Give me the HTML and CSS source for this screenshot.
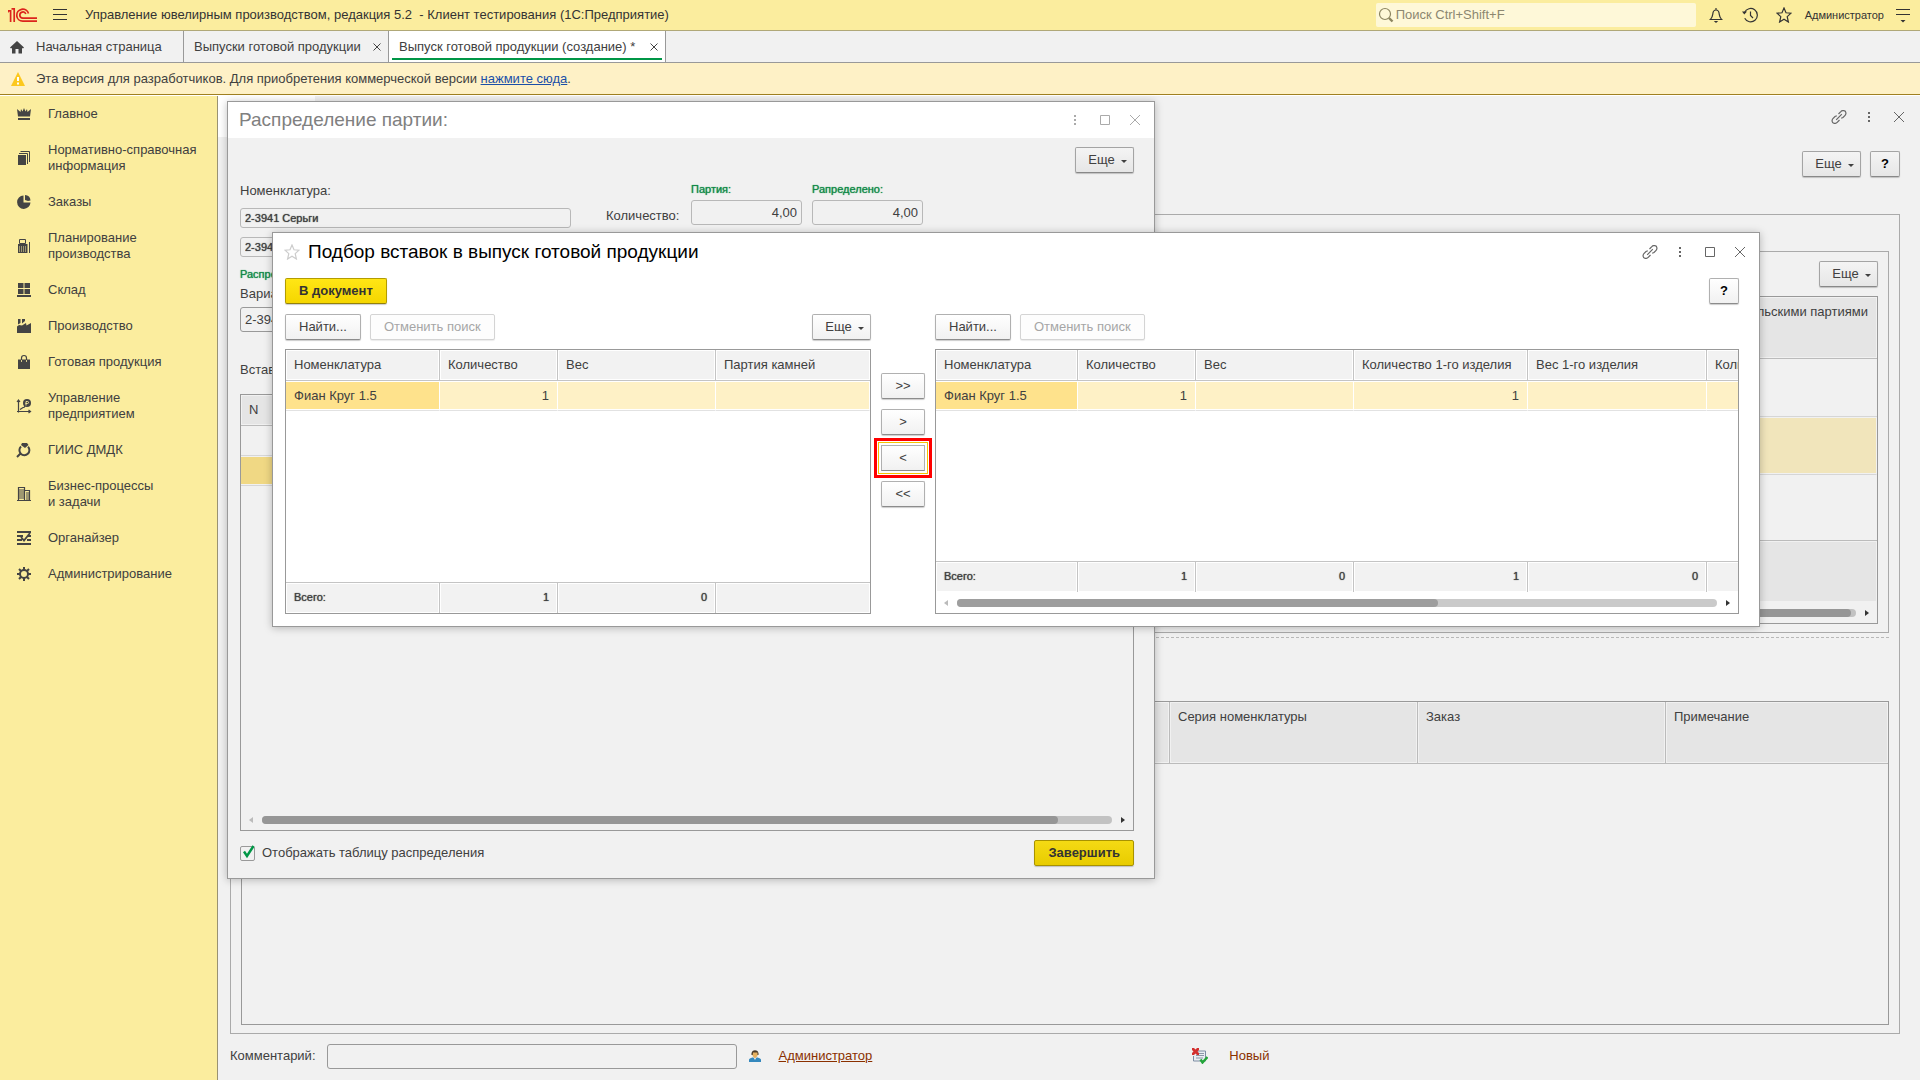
FILE: index.html
```html
<!DOCTYPE html>
<html lang="ru">
<head>
<meta charset="utf-8">
<title>Управление ювелирным производством</title>
<link rel="stylesheet" href="styles.css">
</head>
<body>
<svg class="defs" aria-hidden="true">
  <symbol id="i-link" viewBox="0 0 16 16"><path d="M7.500 5 9.800 2.600a2.700 2.700 0 0 1 1.900-.9h1.200a2.300 2.300 0 0 1 2 2.100v.9a3 3 0 0 1-.8 1.600L12 8.500l-1.800.8M8.500 11l-2.300 2.400a2.700 2.700 0 0 1-1.900.9H3.100a2.300 2.300 0 0 1-2-2.100v-.9a3 3 0 0 1 .8-1.600L4 7.500l1.800-.8M5.200 10.800l5.600-5.600" fill="none" stroke="currentColor" stroke-width="1.200"/></symbol>
  <symbol id="i-dots" viewBox="0 0 16 16"><path d="M7 3h2v2H7zM7 7h2v2H7zM7 11h2v2H7z" fill="currentColor"/></symbol>
  <symbol id="i-max" viewBox="0 0 16 16"><path d="M3.500 3.500h9v9h-9z" fill="none" stroke="currentColor"/></symbol>
  <symbol id="i-close" viewBox="0 0 16 16"><path d="M3 3l10 10M13 3 3 13" fill="none" stroke="currentColor"/></symbol>
  <symbol id="i-star" viewBox="0 0 16 16"><path d="M8 1l2 4.800 5 .4-3.800 3.400 1.200 5.400L8 12.200 3.600 15l1.200-5.400L1 6.200l5-.4z" fill="none" stroke="currentColor" stroke-width="1.200"/></symbol>
  <symbol id="i-caret" viewBox="0 0 6 3"><path d="M0 0h6L3 3z" fill="currentColor"/></symbol>
  <symbol id="i-left" viewBox="0 0 5 6"><path d="M4 0v6L0 3z" fill="currentColor"/></symbol>
  <symbol id="i-right" viewBox="0 0 5 6"><path d="M1 0v6l4-3z" fill="currentColor"/></symbol>
</svg>

<header class="topbar">
  <svg class="logo" viewBox="0 0 30 16"><g fill="none" stroke="#dc241c" stroke-width="1.700"><path d="M0 3.800h2.600V15M0 5.500V3M3.500 1.900h2.700V15"/><path d="M20.500 6.500A6 6 0 1 0 14.800 14.200H29"/><path d="M17.800 7A3.100 3.100 0 1 0 14.800 11.200H29"/></g></svg>
  <button class="bare burger" aria-label="Меню"><svg viewBox="0 0 14 12"><path d="M0 .5h14M0 5.500h14M0 10.500h14" stroke="#333" stroke-width="1.200"/></svg></button>
  <h1 class="app-title">Управление ювелирным производством, редакция 5.2&nbsp; - Клиент тестирования (1С:Предприятие)</h1>
  <label class="search">
    <svg viewBox="0 0 16 16"><circle cx="7" cy="7" r="5.500" fill="none" stroke="#8c8560" stroke-width="1.200"/><path d="M11 11l3.500 3.500" stroke="#8c8560" stroke-width="2.400"/></svg>
    <input type="search" placeholder="Поиск Ctrl+Shift+F" aria-label="Поиск">
  </label>
  <nav class="top-tools">
    <button class="bare" aria-label="Уведомления"><svg viewBox="0 0 16 16"><path d="M1.500 12.500h13M2.500 12.300c2-2 2-3 2.300-5.300.2-2.500 1.200-4 3.200-4s3 1.500 3.200 4c.3 2.300.3 3.300 2.300 5.300M8 1v2" fill="none" stroke="#333" stroke-width="1.200"/><path d="M5.800 14h4.400L8 16z" fill="#333"/></svg></button>
    <button class="bare" aria-label="История"><svg viewBox="0 0 16 16"><path d="M2.500 5.500A6.700 6.700 0 1 1 2.700 11.300M8.500 4.500V8.500l2.500 2.500" fill="none" stroke="#333" stroke-width="1.200"/><path d="M0 4.500h5L2.300 7.500z" fill="#333"/></svg></button>
    <button class="bare" aria-label="Избранное"><svg viewBox="0 0 16 16"><use href="#i-star"/></svg></button>
  </nav>
  <button class="bare user">Администратор</button>
  <button class="bare" aria-label="Настройки"><svg viewBox="0 0 16 16"><path d="M1 2.500h14M1 7.500h14" stroke="#333" stroke-width="1.200"/><path d="M5.500 13h5L8 15.500z" fill="#333"/></svg></button>
</header>

<nav class="tabs">
  <a class="tab tab-home" href="#"><svg viewBox="0 0 14 14"><path d="M7 1 0 7.500l1 1L2 8v5.500h3.500V9h3v4.500H12V8l1 .5 1-1z" fill="#444"/></svg>Начальная страница</a>
  <a class="tab tab-list" href="#">Выпуски готовой продукции<svg class="tab-x" viewBox="0 0 8 8"><path d="M.5.5l7 7M7.500.5l-7 7" stroke="#444"/></svg></a>
  <a class="tab tab-on" href="#">Выпуск готовой продукции (создание) *<svg class="tab-x" viewBox="0 0 8 8"><path d="M.5.5l7 7M7.500.5l-7 7" stroke="#444"/></svg></a>
</nav>

<div class="notice">
  <svg viewBox="0 0 14 14"><path d="M7 0l7 14H0z" fill="#fcc81e"/><path d="M6 5h2v4H6zM6 10.500h2v2H6z" fill="#fff"/></svg>
  <p>Эта версия для разработчиков. Для приобретения коммерческой версии <a href="#">нажмите сюда</a>.</p>
</div>

<div class="workspace">
  <nav class="sidebar">
    <a href="#"><svg viewBox="0 0 14 14"><path d="M0 2l3.500 3L4 2l1.500 2.500L7 1l1.500 3.500L10 2l.5 3L14 2l-1 7.500H1zM1 11h12v2H1z"/></svg>Главное</a>
    <a href="#"><svg viewBox="0 0 14 14"><path d="M1 4h8v10H1z"/><path d="M2 2.500h8.500V13M3.500.5h9V11" fill="none" stroke="#444"/></svg>Нормативно-справочная информация</a>
    <a href="#"><svg viewBox="0 0 14 14"><path d="M6.500.5V7.500H13.500A6.700 6.700 0 1 1 6.500.5z"/><path d="M8 0a6 6 0 0 1 5.500 5.500L11 6 8 5z"/></svg>Заказы</a>
    <a href="#"><svg viewBox="0 0 14 14"><path d="M2.500.5h6v4h-6z" fill="none" stroke="#444"/><path d="M1 5h9.500v9H1z"/><path d="M2 8h8M2 10h8M2 12h8" stroke="#fbed9e" stroke-dasharray="1 1"/><path d="M12.500 3v11" stroke="#444"/></svg>Планирование производства</a>
    <a href="#"><svg viewBox="0 0 14 14"><path d="M1 0h5.500v5H1zM7.500 0H13v5H7.500zM1 6h5.500v5H1zM7.500 6H13v5H7.500zM0 12h14v2H0z"/></svg>Склад</a>
    <a href="#"><svg viewBox="0 0 14 14"><path d="M0 14V7.500L2 6l3 .5L9 4l.5 2.500L14 4v10zM1 0h2.500v4L1 5.500zM5 0h3v2L5 4.500z"/></svg>Производство</a>
    <a href="#"><svg viewBox="0 0 14 14"><path d="M1 4.500h12V14H1z"/><path d="M4.500 7V3a2.500 2.500 0 0 1 5 0v4" fill="none" stroke="#444" stroke-width="1.200"/><path d="M4.500 5v2M9.500 5v2" stroke="#fbed9e" stroke-width=".8"/></svg>Готовая продукция</a>
    <a href="#"><svg viewBox="0 0 14 14"><path d="M1.500 1v12.500M0 12.500h13M0 3l1.500-2L3 3M11.500 11l2 1.500-2 1.500M3 10.500l3-2h1l1-1.500" fill="none" stroke="#444" stroke-width="1.200"/><circle cx="10" cy="4" r="4"/><path d="M9 6.500v-4h1.500a1 1 0 0 1 0 2H8.500" fill="none" stroke="#fbed9e" stroke-width=".9"/></svg>Управление предприятием</a>
    <a href="#"><svg viewBox="0 0 14 14"><path d="M5 0h5l1.500 2L8 5 4 2z"/><path d="M4 3.500a5 5 0 1 0 7 .2M3.500 10.500 0 14" fill="none" stroke="#444" stroke-width="2"/></svg>ГИИС ДМДК</a>
    <a href="#"><svg viewBox="0 0 14 14"><path d="M1.500 14V.5h6V14M8 3.500h4.500V14M0 13.500h14" fill="none" stroke="#444" stroke-width="1.200"/><path d="M2 3h5M2 5h5M2 7h5M2 9h5M2 11h5M9 6h3M9 8h3M9 10h3M9 12h3" stroke="#444" stroke-width="1.200"/></svg>Бизнес-процессы<br>и задачи</a>
    <a href="#"><svg viewBox="0 0 14 14"><path d="M0 1h14M0 5h6M11 5h3M0 9h5M10 9h4M0 13h14" stroke="#444" stroke-width="1.800"/><path d="M4 6l3 3.500L13 2" fill="none" stroke="#444" stroke-width="1.800"/></svg>Органайзер</a>
    <a href="#"><svg viewBox="0 0 14 14"><circle cx="7" cy="7" r="4" fill="none" stroke="#444" stroke-width="2"/><path d="M7 0v3M7 11v3M0 7h3M11 7h3M2 2l2 2M10 10l2 2M12 2l-2 2M4 10l-2 2" stroke="#444" stroke-width="2"/></svg>Администрирование</a>
  </nav>

  <main class="desk">
    <section class="form">
      <div class="form-icons">
        <button class="bare" aria-label="Ссылка"><svg viewBox="0 0 16 16"><use href="#i-link"/></svg></button>
        <button class="bare" aria-label="Еще действия"><svg viewBox="0 0 16 16"><use href="#i-dots"/></svg></button>
        <button class="bare" aria-label="Закрыть"><svg viewBox="0 0 16 16"><use href="#i-close"/></svg></button>
      </div>
      <div class="form-actions">
        <button class="btn dim more">Еще<svg><use href="#i-caret"/></svg></button>
        <button class="btn dim help">?</button>
      </div>
      <div class="frame">
        <div class="group">
          <div class="row-end"><button class="btn dim more">Еще<svg><use href="#i-caret"/></svg></button></div>
          <div class="grid dim goods">
            <div class="grid-view">
              <table>
                <thead><tr><th class="num">Списание с покупательскими партиями</th></tr></thead>
                <tbody>
                  <tr><td></td></tr>
                  <tr class="sel"><td></td></tr>
                  <tr class="filler"><td></td></tr>
                </tbody>
                <tfoot><tr><td></td></tr></tfoot>
              </table>
            </div>
            <div class="hscroll"><svg class="off"><use href="#i-left"/></svg><div class="track"><div class="thumb" style="width:99.7%"></div></div><svg><use href="#i-right"/></svg></div>
          </div>
        </div>
        <hr class="splitter">
        <div class="grid dim series">
          <div class="grid-view">
            <table>
              <colgroup><col><col class="c248"><col class="c248"><col class="c222"></colgroup>
              <thead><tr><th></th><th>Серия номенклатуры</th><th>Заказ</th><th>Примечание</th></tr></thead>
            </table>
          </div>
        </div>
      </div>
      <footer class="form-foot">
        <label for="comment">Комментарий:</label>
        <input class="field" id="comment" type="text">
        <svg class="person" viewBox="0 0 12 12"><path d="M2.500 3.500C2.500-1 9.500-1 9.500 3.500V5h-7z" fill="#4a3a28"/><path d="M4 2.500h4.500L8.500 6 6 8.500 3.500 6z" fill="#e5b060"/><path d="M0 12V9.500C1 8 3 7.500 4.500 7.500L6 10l1.500-2.500C9 7.500 11 8 12 9.500V12z" fill="#3588bd"/></svg>
        <a class="author" href="#">Администратор</a>
        <svg class="state" viewBox="0 0 16 16"><path d="M3.500 3h10v10h-12V8" fill="#e9edf3" stroke="#7d8da3"/><path d="M7 5.500h5M4 7.500h8M4 10h7" stroke="#8b97a8"/><path d="M0 0h2l1.500 1.500L5 0h2v2L5.500 3.500 7 5v2H5L3.500 5.500 2 7H0V5l1.500-1.500L0 2z" fill="#d3302f"/><path d="M8.500 11.500l2 3 5-5.500" fill="none" stroke="#23a53a" stroke-width="2.400"/></svg>
        <span class="status">Новый</span>
      </footer>
    </section>

    <section class="win win-lot">
      <header class="win-head">
        <h2>Распределение партии:</h2>
        <div class="win-icons">
          <button class="bare" aria-label="Еще действия"><svg viewBox="0 0 16 16"><use href="#i-dots"/></svg></button>
          <button class="bare" aria-label="Развернуть"><svg viewBox="0 0 16 16"><use href="#i-max"/></svg></button>
          <button class="bare" aria-label="Закрыть"><svg viewBox="0 0 16 16"><use href="#i-close"/></svg></button>
        </div>
      </header>
      <div class="win-body">
        <div class="row-end"><button class="btn dim more">Еще<svg><use href="#i-caret"/></svg></button></div>
        <div class="lot-fields">
          <div class="lot-left">
            <label for="item">Номенклатура:</label>
            <input class="field small" id="item" type="text" value="2-3941 Серьги" readonly>
            <input class="field small" type="text" value="2-3941 Серьги" aria-label="Характеристика" readonly>
            <strong class="green">Распределение:</strong>
            <label class="tight" for="variant">Вариант:</label>
            <input class="field dark" id="variant" type="text" value="2-3941 Серьги">
          </div>
          <span class="qty-label">Количество:</span>
          <div class="qty"><label class="green" for="q1">Партия:</label><input class="field num" id="q1" type="text" value="4,00" readonly></div>
          <div class="qty"><label class="green" for="q2">Рапределено:</label><input class="field num" id="q2" type="text" value="4,00" readonly></div>
        </div>
        <p class="inserts">Вставки:</p>
        <div class="grid dim lots">
          <div class="grid-view">
            <table>
              <colgroup><col class="c118"><col></colgroup>
              <thead><tr><th>N</th><th></th></tr></thead>
              <tbody>
                <tr><td></td><td></td></tr>
                <tr class="sel"><td class="cur"></td><td></td></tr>
                <tr class="filler"><td></td><td></td></tr>
              </tbody>
            </table>
          </div>
          <div class="hscroll"><svg class="off"><use href="#i-left"/></svg><div class="track"><div class="thumb" style="width:93.6%"></div></div><svg><use href="#i-right"/></svg></div>
        </div>
        <div class="lot-foot">
          <label class="check"><span class="box"><input type="checkbox" checked><svg viewBox="0 0 14 14"><path d="M3 6.500l3 4.500L12.500 1" fill="none" stroke="#009646" stroke-width="2.400"/></svg></span>Отображать таблицу распределения</label>
          <button class="btn primary dim">Завершить</button>
        </div>
      </div>
    </section>

    <section class="win win-pick">
      <header class="win-head">
        <svg class="fav" viewBox="0 0 16 16"><use href="#i-star"/></svg>
        <h2>Подбор вставок в выпуск готовой продукции</h2>
        <div class="win-icons">
          <button class="bare" aria-label="Ссылка"><svg viewBox="0 0 16 16"><use href="#i-link"/></svg></button>
          <button class="bare" aria-label="Еще действия"><svg viewBox="0 0 16 16"><use href="#i-dots"/></svg></button>
          <button class="bare" aria-label="Развернуть"><svg viewBox="0 0 16 16"><use href="#i-max"/></svg></button>
          <button class="bare" aria-label="Закрыть"><svg viewBox="0 0 16 16"><use href="#i-close"/></svg></button>
        </div>
      </header>
      <div class="win-body">
        <div class="row-split">
          <button class="btn primary">В документ</button>
          <button class="btn help">?</button>
        </div>
        <div class="picker">
          <div class="pane">
            <div class="pane-tools">
              <button class="btn">Найти...</button>
              <button class="btn" disabled>Отменить поиск</button>
              <button class="btn more">Еще<svg><use href="#i-caret"/></svg></button>
            </div>
            <div class="grid">
              <div class="grid-view">
                <table>
                  <colgroup><col class="c154"><col class="c118"><col class="c158"><col></colgroup>
                  <thead><tr><th>Номенклатура</th><th>Количество</th><th>Вес</th><th>Партия камней</th></tr></thead>
                  <tbody>
                    <tr class="sel"><td class="cur">Фиан Круг 1.5</td><td class="num">1</td><td></td><td></td></tr>
                    <tr class="filler"><td colspan="4"></td></tr>
                  </tbody>
                  <tfoot><tr><td>Всего:</td><td class="num">1</td><td class="num">0</td><td></td></tr></tfoot>
                </table>
              </div>
            </div>
          </div>
          <div class="movers">
            <button class="btn">&gt;&gt;</button>
            <button class="btn">&gt;</button>
            <button class="btn marked">&lt;</button>
            <button class="btn">&lt;&lt;</button>
          </div>
          <div class="pane">
            <div class="pane-tools">
              <button class="btn">Найти...</button>
              <button class="btn" disabled>Отменить поиск</button>
            </div>
            <div class="grid">
              <div class="grid-view">
                <table class="wide">
                  <colgroup><col class="c142"><col class="c118"><col class="c158"><col class="c174"><col class="c179"><col></colgroup>
                  <thead><tr><th>Номенклатура</th><th>Количество</th><th>Вес</th><th>Количество 1-го изделия</th><th>Вес 1-го изделия</th><th>Количество</th></tr></thead>
                  <tbody>
                    <tr class="sel"><td class="cur">Фиан Круг 1.5</td><td class="num">1</td><td></td><td class="num">1</td><td></td><td></td></tr>
                    <tr class="filler"><td colspan="6"></td></tr>
                  </tbody>
                  <tfoot><tr><td>Всего:</td><td class="num">1</td><td class="num">0</td><td class="num">1</td><td class="num">0</td><td></td></tr></tfoot>
                </table>
              </div>
              <div class="hscroll"><svg class="off"><use href="#i-left"/></svg><div class="track"><div class="thumb" style="width:63.3%"></div></div><svg><use href="#i-right"/></svg></div>
            </div>
          </div>
        </div>
      </div>
    </section>
  </main>
</div>
</body>
</html>
```
FILE: styles.css
```css
* { box-sizing: border-box; }

body {
  margin: 0;
  min-height: 100vh;
  display: flex;
  flex-direction: column;
  background: #f1f1f1;
  color: #404040;
  font: 13px/16px "Liberation Sans", Arial, sans-serif;
}

h1, h2, p { margin: 0; font-size: inherit; font-weight: normal; }
svg { display: block; flex: none; }
button, input { font: inherit; color: inherit; }
.defs { position: absolute; width: 0; height: 0; }

.bare { border: 0; padding: 0; background: none; display: block; }
.bare svg { width: 16px; height: 16px; }

/* Top bar */
.topbar {
  display: flex;
  align-items: center;
  height: 31px;
  padding: 0 9px 0 8px;
  background: #fbed9e;
  border-bottom: 1px solid #b0a878;
  color: #333;
}
.logo { width: 30px; height: 16px; }
.burger { margin-left: 15px; }
.burger svg { width: 14px; height: 12px; }
.app-title { flex: 1; margin-left: 18px; white-space: nowrap; }
.search {
  display: flex;
  align-items: center;
  gap: 2px;
  width: 320px;
  height: 24px;
  padding-left: 2px;
  border-radius: 2px;
  background: #fef8d8;
}
.search svg { width: 16px; height: 16px; }
.search input { flex: 1; min-width: 0; padding: 0; border: 0; background: none; outline: 0; }
.search input::placeholder { color: #8c8770; }
.top-tools { display: flex; gap: 18px; margin: 0 13px 0 12px; }
.user { margin-right: 11px; font-size: 11px; }

/* Open pages */
.tabs { display: flex; height: 32px; border-bottom: 1px solid #999; }
.tab {
  display: flex;
  align-items: center;
  padding: 0 7px 0 10px;
  border-right: 1px solid #999;
  color: #404040;
  text-decoration: none;
  white-space: nowrap;
}
.tab svg { width: 14px; height: 14px; }
.tab .tab-x { width: 8px; height: 8px; margin-left: auto; }
.tab-home { gap: 12px; width: 184px; }
.tab-list { width: 205px; }
.tab-on { width: 277px; background: linear-gradient(#009646, #009646) center bottom 2px / calc(100% - 6px) 2px no-repeat #fff; }

.notice {
  display: flex;
  align-items: center;
  gap: 11px;
  height: 33px;
  padding-left: 11px;
  background: #fef1c6;
  border-bottom: 1px solid #fff;
  box-shadow: inset 0 -1px #a08020;
}
.notice svg { width: 14px; height: 14px; }
.notice a { color: #1a4fa8; }

/* Sections */
.workspace { flex: 1; display: flex; }
.sidebar { flex: none; width: 218px; background: #fbed9e; border-right: 1px solid #999272; }
.sidebar a {
  display: flex;
  align-items: center;
  gap: 17px;
  padding: 10px 8px 10px 17px;
  color: #404040;
  text-decoration: none;
}
.sidebar svg { width: 14px; height: 14px; fill: #444; overflow: visible; }

.desk { flex: 1; position: relative; display: flex; }

/* Buttons */
.btn {
  display: flex;
  align-items: center;
  justify-content: center;
  height: 26px;
  padding: 0 13px;
  border: 1px solid #b0b0b0;
  border-bottom-color: #8c8c8c;
  border-radius: 2px;
  background: linear-gradient(#fff, #f1f1f1);
  box-shadow: 0 1px 1px rgba(0, 0, 0, .2);
  white-space: nowrap;
}
.btn:disabled { border-color: #d4d4d4; color: #a6a6a6; background: #fdfdfd; box-shadow: 0 1px 1px rgba(0, 0, 0, .08); }
.btn.dim { background: linear-gradient(#f4f4f4, #e6e6e6); border-color: #a4a4a4; border-bottom-color: #888; }
.btn.more { width: 59px; gap: 6px; padding: 0 6px 0 12px; }
.btn.more svg { width: 6px; height: 3px; margin-top: 3px; }
.btn.help { width: 30px; padding: 0; color: #000; font-weight: bold; font-size: 13px; }
.btn.primary { border-color: #b39c00; border-bottom-color: #94810a; background: linear-gradient(#ffe615, #f5d600); color: #333; font-weight: bold; }
.btn.primary.dim { background: linear-gradient(#f4da14, #e8cc00); border-color: #a89200; }

/* Fields */
.field {
  height: 25px;
  padding: 0 4px;
  border: 1px solid #b8b8b8;
  border-radius: 3px;
  background: #f1f1f1;
}
.field.dark, .form-foot .field { border-color: #999; }
.num { text-align: right; }
.green { color: #128a48; }
.field.small { height: 20px; }
.field.small, .green, .grid tfoot td { font-size: 11px; font-weight: normal; text-shadow: 0 0 1px currentColor; }

/* Data grids */
.grid { display: flex; flex-direction: column; border: 1px solid #999; background: #fff; }
.grid-view { flex: 1; min-width: 0; min-height: 0; overflow: hidden; }
.grid table { width: 100%; height: 100%; table-layout: fixed; border-collapse: separate; border-spacing: 0; }
.grid table.wide { width: 900px; }
.grid th, .grid td { padding: 0 8px; text-align: left; font-weight: normal; white-space: nowrap; }
.grid th {
  height: 31px;
  background: #f2f2f2;
  border-right: 1px solid #c4c4c4;
  border-bottom: 1px solid #c4c4c4;
  box-shadow: inset 0 0 0 1px #fff;
}
.grid tbody td { height: 30px; border-bottom: 1px solid #e2e2e2; }
.grid .sel td { background: #fef1c6; border-right: 1px solid #fff; box-shadow: inset 0 1px #fff, inset 0 -1px #fff; }
.grid .sel .cur { background: #fee28c; }
.grid .filler td { height: auto; border: 0; }
.grid tfoot td {
  height: 31px;
  padding-bottom: 2px;
  background: #f2f2f2;
  border-top: 1px solid #c4c4c4;
  border-right: 1px solid #c4c4c4;
  box-shadow: inset 0 0 0 1px #fff;
}
.grid th:last-child, .grid tfoot td:last-child { border-right: 0; }
.grid th.num, .grid td.num { text-align: right; }

.grid.dim { background: #f1f1f1; }
.grid.dim th, .grid.dim tfoot td { background: #e5e5e5; border-color: #bbb; box-shadow: inset 0 0 0 1px #f1f1f1; }
.grid.dim tbody td { border-bottom-color: #d6d6d6; }
.grid.dim .sel td { background: #f1e5bb; border-right-color: #f1f1f1; box-shadow: inset 0 1px #f1f1f1, inset 0 -1px #f1f1f1; }
.grid.dim .sel .cur { background: #f0d884; }

.c118 { width: 118px; }
.c142 { width: 142px; }
.c154 { width: 154px; }
.c158 { width: 158px; }
.c174 { width: 174px; }
.c179 { width: 179px; }
.c222 { width: 222px; }
.c248 { width: 248px; }

.hscroll { display: flex; align-items: center; gap: 8px; padding: 7px 8px 6px; }
.hscroll svg { width: 5px; height: 6px; color: #333; }
.hscroll .off { color: #bbb; }
.track { flex: 1; height: 8px; border-radius: 4px; background: #cacaca; }
.thumb { height: 8px; border-radius: 4px; background: #9e9e9e; }
.dim .track { background: #c2c2c2; }
.dim .thumb { background: #969696; }

/* Document form */
.form {
  flex: 1;
  display: flex;
  flex-direction: column;
  min-width: 0;
  padding-top: 13px;
  background: linear-gradient(#fff, #fff) 0 0 / 97px 41px no-repeat;
}
.form-icons { display: flex; justify-content: flex-end; gap: 14px; padding-right: 13px; color: #666; }
.form-actions { display: flex; justify-content: flex-end; gap: 9px; margin: 26px 20px 37px; }
.row-end { display: flex; justify-content: flex-end; }
.frame {
  flex: 1;
  display: flex;
  flex-direction: column;
  margin: 0 20px 0 12px;
  padding: 36px 10px 8px;
  border: 1px solid #aaa;
}
.group { padding: 9px 10px 8px; border: 1px solid #aaa; }
.goods { height: 328px; margin-top: 9px; }
.goods th { height: 62px; padding-top: 7px; vertical-align: top; }
.grid.goods th.num { padding-right: 9px; }
.goods tbody td { height: 58px; }
.goods tfoot td { height: 62px; }
.splitter { width: 100%; margin: 4px 0 63px; border: 0; border-top: 1px dashed #b8b8b8; }
.series { flex: 1; }
.series table { height: auto; }
.series th { height: 62px; padding-top: 7px; vertical-align: top; }
.form-foot { display: flex; align-items: center; height: 46px; padding: 0 12px 2px; }
.form-foot .field { width: 410px; margin: 0 12px 0 11px; }
.person { width: 12px; height: 12px; }
.author { margin-left: 18px; color: #8a3000; }
.state { width: 16px; height: 16px; margin-left: 320px; }
.status { margin-left: 21px; color: #8a3000; }

/* Floating windows */
.win { position: absolute; border: 1px solid #999; box-shadow: 0 1px 8px rgba(0, 0, 0, .25); }
.win-head { display: flex; align-items: center; background: #fff; }
.win-head h2 { flex: 1; font-size: 19px; line-height: 22px; }
.win-icons { display: flex; gap: 14px; color: #666; }

.win-lot { left: 9px; top: 5px; width: 928px; background: #f1f1f1; }
.win-lot .win-head { height: 36px; padding: 0 11px; color: #808080; }
.win-lot .win-icons { color: #aaa; }
.win-lot .win-body { padding: 9px 20px 12px 12px; }
.lot-fields { display: flex; padding-top: 10px; }
.lot-left { display: flex; flex-direction: column; gap: 9px; width: 331px; }
.lot-left .tight { margin: -5px 0 -4px; }
.qty-label { margin: 25px 0 0 35px; width: 85px; }
.qty { display: flex; flex-direction: column; gap: 3px; width: 111px; margin: -2px 10px 0 0; }
.inserts { margin: 30px 0 16px; }
.lots { height: 437px; }
.lots tbody td { height: 30px; }
.lot-foot { display: flex; justify-content: space-between; align-items: center; margin-top: 9px; }
.check { display: flex; align-items: center; gap: 7px; }
.box { position: relative; width: 15px; height: 15px; }
.box input { appearance: none; display: block; width: 15px; height: 15px; margin: 0; border: 1px solid #999; border-radius: 2px; }
.box svg { position: absolute; left: 1px; top: -1px; width: 14px; height: 14px; }

.win-pick { left: 54px; right: 160px; top: 136px; background: #fff; }
.win-pick .win-head { height: 38px; padding: 0 11px; color: #000; }
.fav { width: 16px; height: 16px; margin-right: 8px; color: #ccc; }
.win-pick .win-body { padding: 7px 20px 12px 12px; }
.row-split { display: flex; justify-content: space-between; margin-bottom: 10px; }
.picker { display: grid; grid-template-columns: 586px 44px minmax(0, 1fr); gap: 10px; }
.pane { display: flex; flex-direction: column; gap: 9px; min-width: 0; }
.pane-tools { display: flex; gap: 9px; }
.pane-tools .more { margin-left: auto; }
.pane .grid { height: 265px; }
.movers { display: flex; flex-direction: column; gap: 10px; padding-top: 59px; }
.movers .btn { padding: 0; }
.marked { border-radius: 0; outline: 3px solid #f00; outline-offset: 4px; box-shadow: 0 0 0 2px #fff, 0 0 0 3px #f5c400; }
```
